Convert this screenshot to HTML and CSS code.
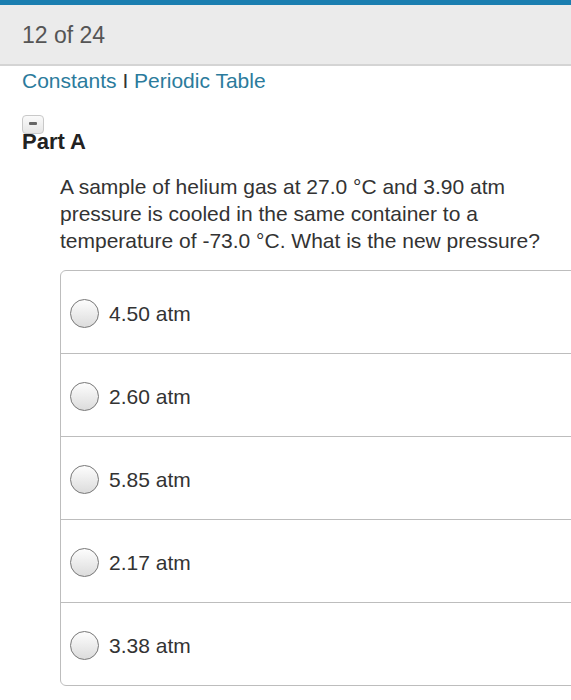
FILE: index.html
```html
<!DOCTYPE html>
<html>
<head>
<meta charset="utf-8">
<link rel="stylesheet" href="styles.css">
</head>
<body>
<div class="topbar"></div>
<div class="header"><span class="count">12 of 24</span></div>
<div class="links"><a class="link">Constants</a> <span class="sep">I</span> <a class="link">Periodic Table</a></div>
<div class="part">
  <div class="collapse"><span class="dash"></span></div>
  <h2 class="part-title">Part A</h2>
</div>
<p class="question">A sample of helium gas at 27.0 °C and 3.90 atm pressure is cooled in the same container to a temperature of -73.0 °C. What is the new pressure?</p>
<div class="options">
  <div class="option"><span class="radio"></span><span class="label">4.50 atm</span></div>
  <div class="option"><span class="radio"></span><span class="label">2.60 atm</span></div>
  <div class="option"><span class="radio"></span><span class="label">5.85 atm</span></div>
  <div class="option"><span class="radio"></span><span class="label">2.17 atm</span></div>
  <div class="option"><span class="radio"></span><span class="label">3.38 atm</span></div>
</div>
</body>
</html>
```
FILE: styles.css
```css
* { box-sizing: border-box; }
html, body { margin: 0; padding: 0; background: #fff; overflow: hidden; }
body { font-family: "Liberation Sans", Arial, Helvetica, sans-serif; color: #333; width: 571px; }
.topbar { height: 5px; background: #1a7eb0; }
.header {
  height: 61px;
  background: #ebebeb;
  border-bottom: 2px solid #d4d4d4;
  display: flex;
  align-items: center;
  padding-left: 22px;
  padding-top: 2px;
}
.count { font-size: 23px; color: #555; }
.links { padding: 2px 0 0 22px; font-size: 21px; line-height: 26px; }
.link { color: #2b7b9c; }
.sep { color: #333; }
.part { position: relative; margin-top: 21px; padding-left: 22px; height: 48px; }
.collapse {
  position: absolute; left: 22px; top: 0;
  width: 22px; height: 19px;
  border: 1.5px solid #c9c9c9; border-radius: 4px;
  background: linear-gradient(#fafafa, #e6e6e6);
  display: flex; justify-content: center; padding-top: 6px;
}
.dash { width: 8px; height: 3px; background: #666; border-radius: 1px; }
.part-title { position: relative; margin: 0; padding-top: 14px; font-size: 22px; font-weight: bold; color: #222; line-height: 26px; }
.question { margin: 10px 0 0 60px; width: 505px; font-size: 21px; line-height: 27px; color: #333; }
.options {
  margin: 16px 0 0 60px;
  width: 530px;
  border: 1.5px solid #bdbdbd;
  border-radius: 6px 0 0 6px;
}
.option {
  height: 83px;
  display: flex; align-items: center;
  padding-left: 9px;
  padding-top: 4px;
  border-top: 1.5px solid #bdbdbd;
}
.option:first-child { border-top: none; height: 81.5px; }
.radio {
  width: 29px; height: 29px; border-radius: 50%;
  border: 1.5px solid #777;
  background: linear-gradient(#fdfdfd, #dcdcdc);
  margin-right: 10px;
  flex: none;
}
.label { font-size: 21px; color: #333; }
```
